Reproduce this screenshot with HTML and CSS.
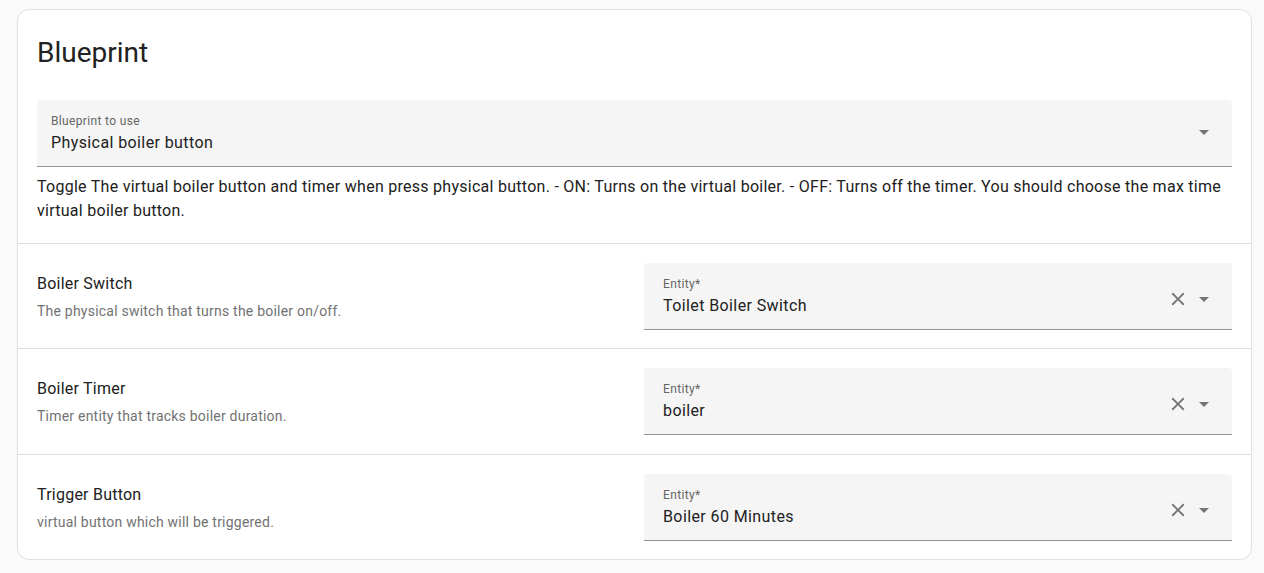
FILE: index.html
```html
<!DOCTYPE html>
<html lang="en">
<head>
<meta charset="utf-8">
<title>Blueprint</title>
<link rel="stylesheet" href="styles.css">
</head>
<body>
<div class="card">
  <div class="card-head">
    <h1 class="title">Blueprint</h1>
    <div class="field select">
      <div class="field-text">
        <div class="field-label">Blueprint to use</div>
        <div class="field-value">Physical boiler button</div>
      </div>
      <div class="field-icons select-icons">
        <svg class="icon-arrow" viewBox="0 0 24 24"><path d="M7,10L12,15L17,10H7Z"/></svg>
      </div>
    </div>
    <p class="desc">Toggle The virtual boiler button and timer when press physical button. - ON: Turns on the virtual boiler. - OFF: Turns off the timer. You should choose the max time virtual boiler button.</p>
  </div>

  <div class="row">
    <div class="row-info">
      <div class="row-title">Boiler Switch</div>
      <div class="row-desc">The physical switch that turns the boiler on/off.</div>
    </div>
    <div class="field entity">
      <div class="field-text">
        <div class="field-label">Entity*</div>
        <div class="field-value">Toilet Boiler Switch</div>
      </div>
      <div class="field-icons">
        <svg class="icon-close" viewBox="0 0 24 24"><path d="M19,6.41L17.59,5L12,10.59L6.41,5L5,6.41L10.59,12L5,17.59L6.41,19L12,13.41L17.59,19L19,17.59L13.41,12L19,6.41Z"/></svg>
        <svg class="icon-arrow" viewBox="0 0 24 24"><path d="M7,10L12,15L17,10H7Z"/></svg>
      </div>
    </div>
  </div>

  <div class="row row-mid">
    <div class="row-info">
      <div class="row-title">Boiler Timer</div>
      <div class="row-desc">Timer entity that tracks boiler duration.</div>
    </div>
    <div class="field entity">
      <div class="field-text">
        <div class="field-label">Entity*</div>
        <div class="field-value">boiler</div>
      </div>
      <div class="field-icons">
        <svg class="icon-close" viewBox="0 0 24 24"><path d="M19,6.41L17.59,5L12,10.59L6.41,5L5,6.41L10.59,12L5,17.59L6.41,19L12,13.41L17.59,19L19,17.59L13.41,12L19,6.41Z"/></svg>
        <svg class="icon-arrow" viewBox="0 0 24 24"><path d="M7,10L12,15L17,10H7Z"/></svg>
      </div>
    </div>
  </div>

  <div class="row">
    <div class="row-info">
      <div class="row-title">Trigger Button</div>
      <div class="row-desc">virtual button which will be triggered.</div>
    </div>
    <div class="field entity">
      <div class="field-text">
        <div class="field-label">Entity*</div>
        <div class="field-value">Boiler 60 Minutes</div>
      </div>
      <div class="field-icons">
        <svg class="icon-close" viewBox="0 0 24 24"><path d="M19,6.41L17.59,5L12,10.59L6.41,5L5,6.41L10.59,12L5,17.59L6.41,19L12,13.41L17.59,19L19,17.59L13.41,12L19,6.41Z"/></svg>
        <svg class="icon-arrow" viewBox="0 0 24 24"><path d="M7,10L12,15L17,10H7Z"/></svg>
      </div>
    </div>
  </div>
</div>
</body>
</html>
```
FILE: styles.css
```css
* { box-sizing: border-box; }

html, body {
  margin: 0;
  padding: 0;
  background: #fafafa;
  font-family: Roboto, "Noto Sans", "Liberation Sans", sans-serif;
  color: #212121;
}

body {
  padding: 9px 12px 0 17px;
}

.card {
  width: 1235px;
  background: #ffffff;
  border: 1px solid #e0e0e0;
  border-radius: 12px;
}

.card-head {
  padding: 25px 19px 20px 19px;
}

.title {
  margin: 0;
  font-size: 28px;
  line-height: 36px;
  font-weight: 400;
  color: #212121;
}

.field {
  display: flex;
  height: 67px;
  background: #f5f5f5;
  border-bottom: 1px solid #949494;
  border-radius: 4px 4px 0 0;
}

.select {
  margin-top: 29px;
  padding: 0 16px 0 14px;
}

.entity {
  padding: 0 16px 0 19px;
}

.field-text {
  flex: 1;
  padding-top: 13px;
  min-width: 0;
}

.field-label {
  font-size: 12px;
  line-height: 16px;
  letter-spacing: 0.35px;
  color: #666666;
}

.field-value {
  margin-top: 2px;
  font-size: 16px;
  line-height: 24px;
  letter-spacing: 0.4px;
  color: #212121;
}

.field-icons {
  display: flex;
  align-items: center;
  height: 24px;
  margin-top: 24px;
  gap: 3px;
}

.select-icons {
  margin-top: 20px;
}

.icon-close {
  width: 22px;
  height: 22px;
  fill: #757575;
}

.icon-arrow {
  width: 24px;
  height: 24px;
  fill: #757575;
}

.desc {
  margin: 8px 0 0 0;
  font-size: 16px;
  line-height: 24px;
  letter-spacing: 0.27px;
  color: #212121;
}

.row {
  display: grid;
  grid-template-columns: 1fr 588px;
  align-items: center;
  border-top: 1px solid #e0e0e0;
  padding: 19px 19px 18px 19px;
}

.row-mid {
  padding-bottom: 19px;
}

.row-info {
  display: flex;
  flex-direction: column;
}

.row-title {
  font-size: 16px;
  line-height: 24px;
  letter-spacing: 0.23px;
  color: #212121;
}

.row-desc {
  margin-top: 5px;
  font-size: 14px;
  line-height: 20px;
  letter-spacing: 0.22px;
  color: #727272;
}
```
